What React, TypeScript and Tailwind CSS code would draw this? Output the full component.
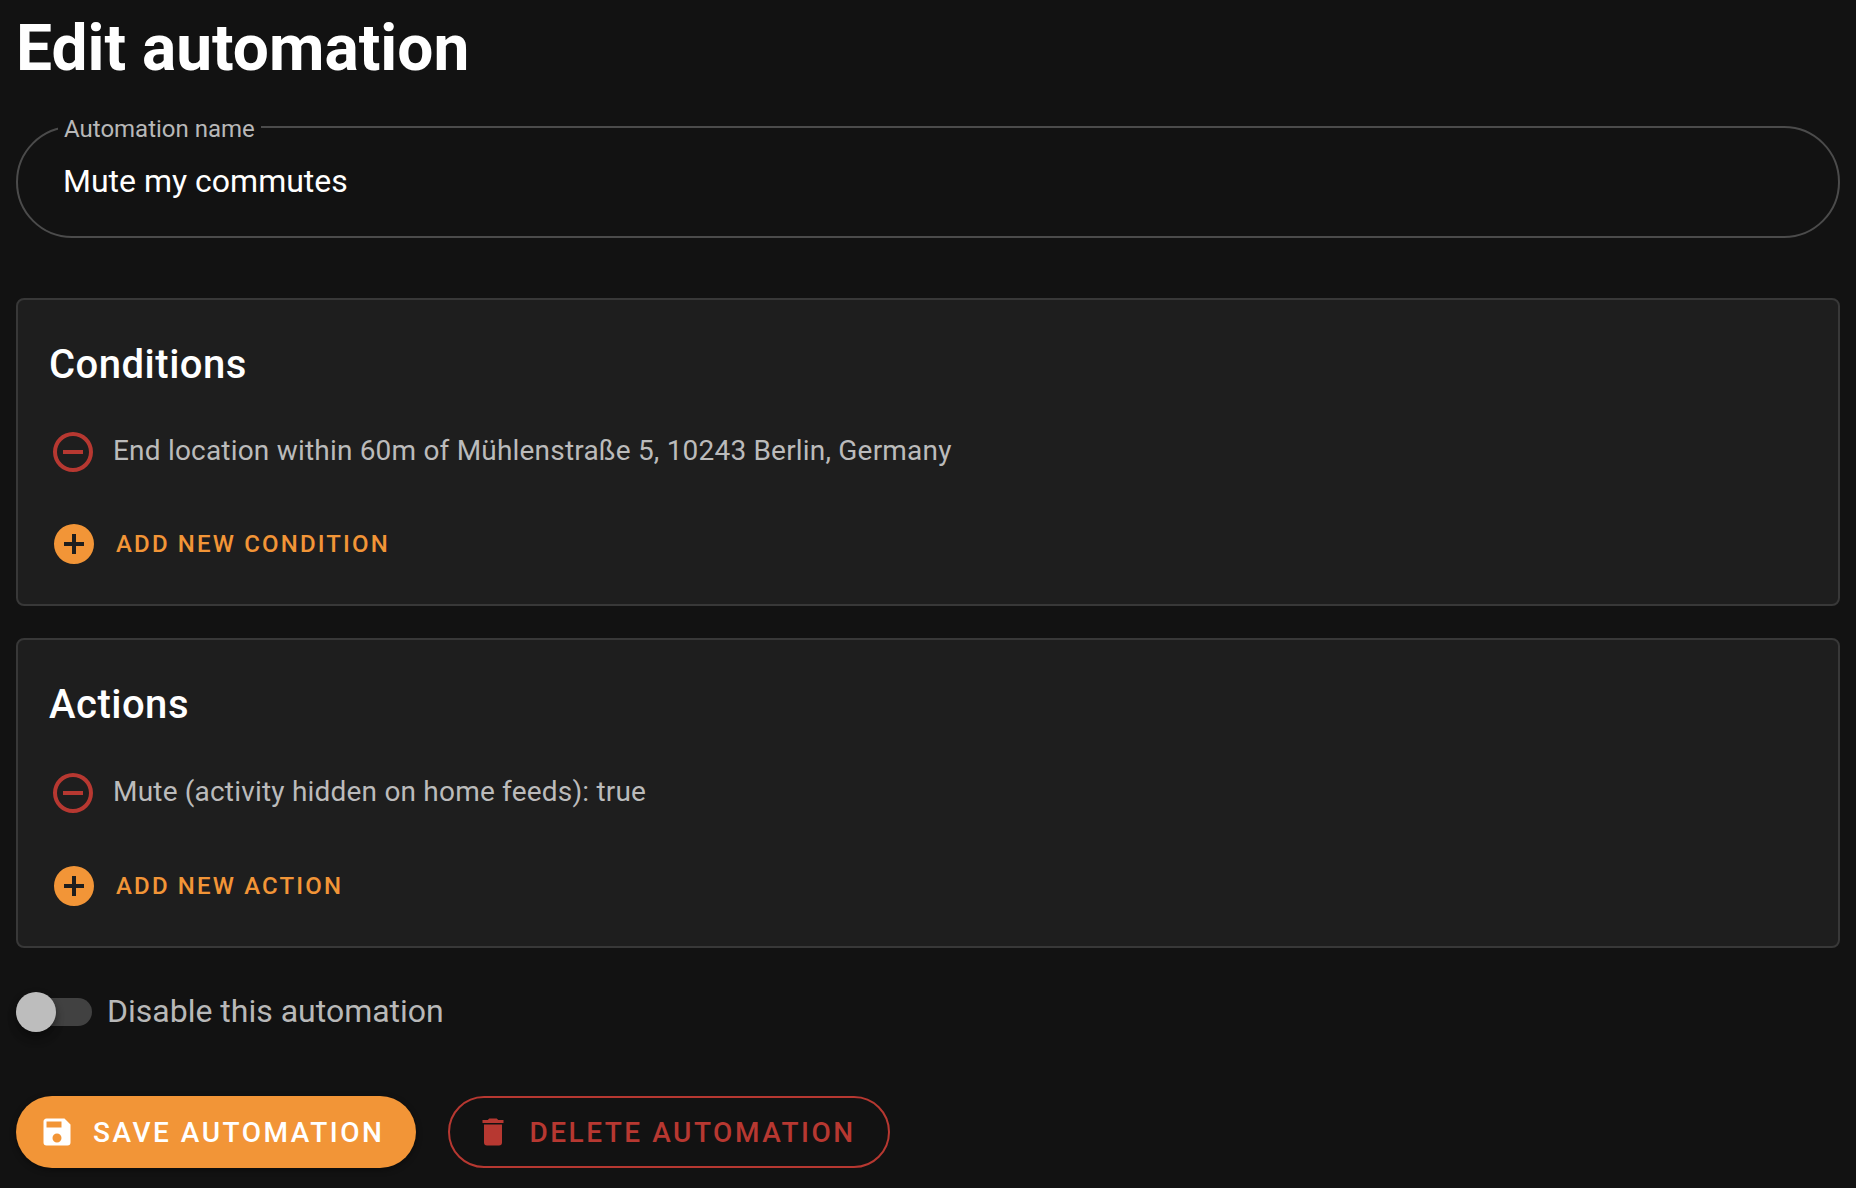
import { useState, type ReactNode } from "react";

const ICONS = {
  minusCircle:
    "M12,20C7.59,20 4,16.41 4,12C4,7.59 7.59,4 12,4C16.41,4 20,7.59 20,12C20,16.41 16.41,20 12,20M12,2A10,10 0 0,0 2,12A10,10 0 0,0 12,22A10,10 0 0,0 22,12A10,10 0 0,0 12,2M7,13H17V11H7",
  plusCircle:
    "M17,13H13V17H11V13H7V11H11V7H13V11H17M12,2A10,10 0 0,0 2,12A10,10 0 0,0 12,22A10,10 0 0,0 22,12A10,10 0 0,0 12,2Z",
  save: "M15,9H5V5H15M12,19A3,3 0 0,1 9,16A3,3 0 0,1 12,13A3,3 0 0,1 15,16A3,3 0 0,1 12,19M17,3H5C3.89,3 3,3.9 3,5V19A2,2 0 0,0 5,21H19A2,2 0 0,0 21,19V7L17,3Z",
  trash:
    "M19,4H15.5L14.5,3H9.5L8.5,4H5V6H19M6,19A2,2 0 0,0 8,21H16A2,2 0 0,0 18,19V7H6V19Z",
};

function Icon({ name, className }: { name: keyof typeof ICONS; className: string }) {
  return (
    <svg viewBox="0 0 24 24" fill="currentColor" aria-hidden="true" className={className}>
      <path d={ICONS[name]} />
    </svg>
  );
}

function Card({ title, addLabel, children }: { title: string; addLabel: string; children: ReactNode }) {
  return (
    <section className="rounded-lg border-2 border-[#383838] bg-[#1e1e1e] px-[31px] pt-[33px] pb-8">
      <h2 className="text-[40px] leading-[64px] font-medium tracking-[0.0125em] text-white">{title}</h2>
      <ul className="mt-[23px]">{children}</ul>
      <button
        type="button"
        className="mt-8 flex h-14 items-center gap-[18px] pl-px text-2xl font-medium tracking-[0.09em] text-[#f29537] uppercase"
      >
        <Icon name="plusCircle" className="size-12" />
        {addLabel}
      </button>
    </section>
  );
}

function Rule({ text, className }: { text: string; className: string }) {
  return (
    <li className={`flex items-center gap-4 text-[28px] tracking-[0.007em] text-[#bbbbbb] ${className}`}>
      <button type="button" aria-label={`Remove: ${text}`} className="text-[#b73831]">
        <Icon name="minusCircle" className="size-12" />
      </button>
      <span className="pb-0.5">{text}</span>
    </li>
  );
}

export default function App() {
  const [name, setName] = useState("Mute my commutes");
  const [disabled, setDisabled] = useState(false);

  return (
    <main className="min-h-screen bg-[#121212] px-4 pt-px pb-5 font-['Roboto',sans-serif]">
      <h1 className="text-[64px] leading-[96px] font-bold text-white">Edit automation</h1>

      <fieldset className="mt-4 rounded-[56px] border-2 border-[#4b4b4b] px-10 pb-[15px]">
        <legend className="px-1.5 pt-1 text-2xl leading-6 text-[#b8b8b8]">
          <label htmlFor="automation-name">Automation name</label>
        </legend>
        <input
          id="automation-name"
          type="text"
          value={name}
          onChange={(e) => setName(e.target.value)}
          className="block h-20 w-full bg-transparent px-[5px] text-[32px] text-white outline-none"
        />
      </fieldset>

      <div className="mt-[60px] flex flex-col gap-8">
        <Card title="Conditions" addLabel="Add new condition">
          <Rule text="End location within 60m of Mühlenstraße 5, 10243 Berlin, Germany" className="h-16" />
        </Card>
        <Card title="Actions" addLabel="Add new action">
          <Rule text="Mute (activity hidden on home feeds): true" className="h-[66px]" />
        </Card>
      </div>

      <div className="mt-10 flex h-12 items-center gap-[15px]">
        <input
          id="disable-automation"
          type="checkbox"
          role="switch"
          checked={disabled}
          onChange={(e) => setDisabled(e.target.checked)}
          className="relative h-10 w-[76px] cursor-pointer appearance-none before:absolute before:inset-y-1.5 before:right-0 before:left-1 before:rounded-full before:bg-[#414141] after:absolute after:top-0 after:left-0 after:size-10 after:rounded-full after:bg-[#bdbdbd] after:shadow-[0_4px_8px_rgba(0,0,0,0.3),0_8px_10px_rgba(0,0,0,0.15)] checked:after:left-9"
        />
        <label htmlFor="disable-automation" className="pb-0.5 text-[32px] leading-[46px] text-[#b8b8b8]">
          Disable this automation
        </label>
      </div>

      <div className="mt-[60px] flex flex-wrap gap-8 text-[28px] font-medium tracking-[0.09em]">
        <button
          type="button"
          className="flex h-[72px] items-center gap-[18px] rounded-full bg-[#f29537] pr-8 pl-[23px] text-white uppercase shadow-[0_2px_6px_rgba(0,0,0,0.4)]"
        >
          <Icon name="save" className="size-9" />
          <span className="pt-0.5">Save automation</span>
        </button>
        <button
          type="button"
          className="flex h-[72px] items-center gap-[18px] rounded-full border-2 border-[#b73831] pr-8 pl-[25px] text-[#b73831] uppercase"
        >
          <Icon name="trash" className="size-9" />
          <span className="pt-0.5">Delete automation</span>
        </button>
      </div>
    </main>
  );
}
